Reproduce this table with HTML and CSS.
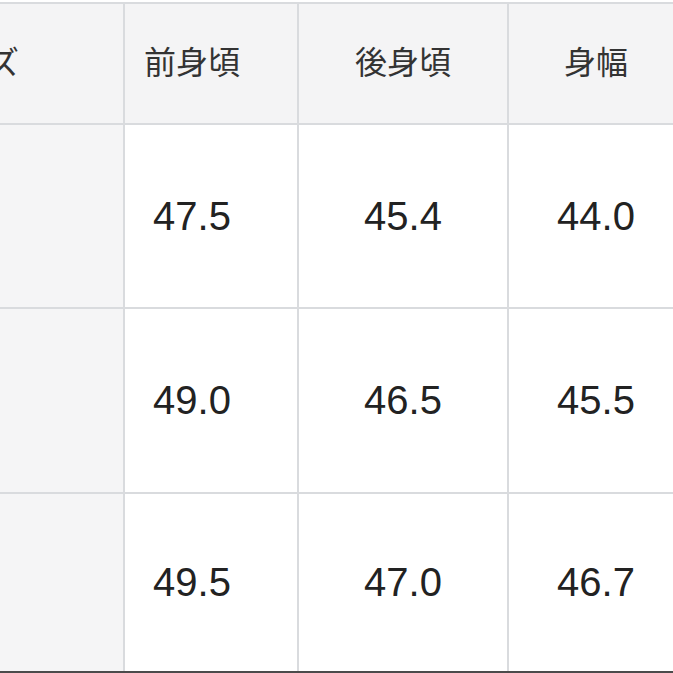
FILE: index.html
```html
<!DOCTYPE html>
<html lang="ja">
<head>
<meta charset="utf-8">
<link rel="stylesheet" href="styles.css">
</head>
<body>
<div class="viewport">
  <div class="size-table">
    <div class="cell head c1">サイズ</div>
    <div class="cell head c2">前身頃</div>
    <div class="cell head c3">後身頃</div>
    <div class="cell head c4">身幅</div>

    <div class="cell label c1"></div>
    <div class="cell num c2">47.5</div>
    <div class="cell num c3">45.4</div>
    <div class="cell num c4">44.0</div>

    <div class="cell label c1"></div>
    <div class="cell num c2">49.0</div>
    <div class="cell num c3">46.5</div>
    <div class="cell num c4">45.5</div>

    <div class="cell label c1"></div>
    <div class="cell num c2">49.5</div>
    <div class="cell num c3">47.0</div>
    <div class="cell num c4">46.7</div>
  </div>
</div>
</body>
</html>
```
FILE: styles.css
```css
html, body {
  margin: 0;
  padding: 0;
  background: #ffffff;
}
body {
  width: 673px;
  height: 673px;
  overflow: hidden;
}
.viewport {
  width: 673px;
  height: 673px;
  overflow: hidden;
  padding-top: 2px;
  box-sizing: border-box;
}
.size-table {
  display: grid;
  grid-template-columns: 303px 172px 208px 174px;
  grid-template-rows: 119px 182px 183px 177px;
  gap: 2px;
  background: #d9dbde;
  border-top: 2px solid #d9dbde;
  border-bottom: 2px solid #4b4b4b;
  margin-left: -180px;
  width: max-content;
}
.cell {
  display: flex;
  align-items: center;
  justify-content: center;
  background: #ffffff;
  color: #222222;
}
.head {
  background: #f4f4f5;
  font-family: "Noto Sans CJK JP", "Noto Sans", sans-serif;
  font-size: 32px;
  font-weight: 400;
  color: #333333;
  padding-bottom: 8px;
  box-sizing: border-box;
}
.label {
  background: #f5f5f6;
}
.num {
  font-family: "Liberation Sans", Arial, sans-serif;
  font-size: 40px;
}
.c2 {
  padding-right: 38px;
}
```
